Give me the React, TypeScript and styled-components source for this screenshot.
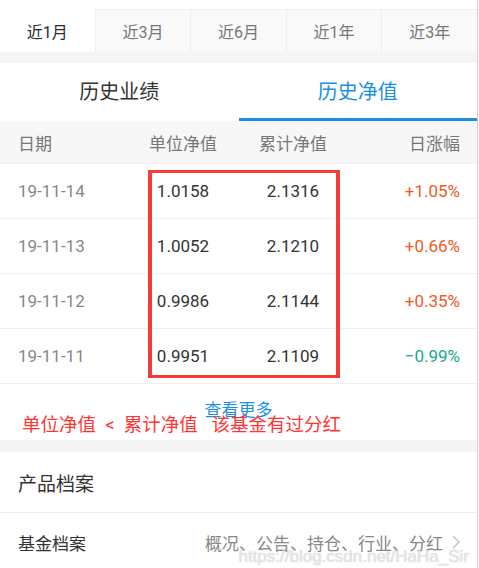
import React from "react";
import styled, { createGlobalStyle } from "styled-components";

const GlobalStyle = createGlobalStyle`
  html, body {
    margin: 0;
    padding: 0;
    background: #fff;
  }
  body {
    font-family: Roboto, "Noto Sans CJK SC", sans-serif;
  }
`;

const Page = styled.div`
  width: 477px;
  border-right: 1px solid #cfcfcf;
  min-height: 568px;
  position: relative;
  overflow: hidden;
`;

const PeriodBar = styled.div`
  display: flex;
  padding-top: 9px;
  height: 43px;
`;

const PeriodTab = styled.div<{ $active?: boolean }>`
  flex: 1;
  display: flex;
  align-items: center;
  justify-content: center;
  font-size: 16px;
  color: ${({ $active }) => ($active ? "#2a2a2a" : "#777")};
  background: ${({ $active }) => ($active ? "#fff" : "#f9f9f9")};
  border-top: 1px solid ${({ $active }) => ($active ? "#fff" : "#eeeeee")};
  margin-top: ${({ $active }) => ($active ? "-9px" : "0")};
  padding-top: ${({ $active }) => ($active ? "9px" : "0")};

  & + & {
    border-left: 1px solid #eeeeee;
  }
`;

const Gap = styled.div<{ $h: number }>`
  height: ${({ $h }) => $h}px;
  background: #f4f4f4;
`;

const SectionBar = styled.div`
  display: flex;
  height: 58px;
`;

const SectionTab = styled.div<{ $active?: boolean }>`
  flex: 1;
  display: flex;
  align-items: center;
  justify-content: center;
  font-size: 20px;
  color: ${({ $active }) => ($active ? "#1a8fe3" : "#333")};
  border-bottom: 3px solid ${({ $active }) => ($active ? "#1a8fe3" : "transparent")};
  box-sizing: border-box;
`;

const Row = styled.div<{ $head?: boolean }>`
  display: grid;
  grid-template-columns: 110px 110px 110px 1fr;
  align-items: center;
  padding: 0 17px 0 18px;
  height: ${({ $head }) => ($head ? "43px" : "55px")};
  background: ${({ $head }) => ($head ? "#f7f7f7" : "#fff")};
  border-bottom: 1px solid #f0f0f0;
  box-sizing: border-box;
  font-size: 17px;
`;

const Cell = styled.div<{ $align?: "left" | "center" | "right"; $color?: string }>`
  text-align: ${({ $align }) => $align ?? "left"};
  color: ${({ $color }) => $color ?? "#333"};
`;

const Body = styled.div`
  position: relative;
`;

const Highlight = styled.div`
  position: absolute;
  left: 148px;
  top: 6px;
  width: 192px;
  height: 208px;
  border: solid #f23b3b;
  border-width: 3px 4px;
  box-sizing: border-box;
  pointer-events: none;
`;

const MoreArea = styled.div`
  position: relative;
  height: 56px;
`;

const MoreLink = styled.div`
  padding-top: 15px;
  text-align: center;
  font-size: 17px;
  line-height: 22px;
  color: #1a8fe3;
`;

const Note = styled.div`
  position: absolute;
  left: 22px;
  top: 30px;
  font-size: 18.5px;
  line-height: 22px;
  color: #ff3535;
  white-space: pre;
`;

const InfoRow = styled.div<{ $h: number; $line?: boolean }>`
  display: flex;
  align-items: center;
  justify-content: space-between;
  padding: 0 17px 0 18px;
  height: ${({ $h }) => $h}px;
  border-bottom: ${({ $line }) => ($line ? "1px solid #eeeeee" : "none")};
  box-sizing: border-box;
`;

const InfoTitle = styled.div<{ $size: number }>`
  font-size: ${({ $size }) => $size}px;
  color: #333;
`;

const InfoSub = styled.div`
  display: flex;
  align-items: center;
  gap: 9px;
  font-size: 17px;
  color: #888;
`;

const Watermark = styled.div`
  position: absolute;
  right: 8px;
  bottom: 4px;
  font-size: 17px;
  color: rgba(232, 232, 232, 0.85);
  text-shadow: 0 0 1px rgba(150, 150, 150, 0.5);
  font-family: "Liberation Sans", Arial, sans-serif;
  pointer-events: none;
`;

const periods = ["近1月", "近3月", "近6月", "近1年", "近3年"];

const rows = [
  { date: "19-11-14", unit: "1.0158", total: "2.1316", change: "+1.05%" },
  { date: "19-11-13", unit: "1.0052", total: "2.1210", change: "+0.66%" },
  { date: "19-11-12", unit: "0.9986", total: "2.1144", change: "+0.35%" },
  { date: "19-11-11", unit: "0.9951", total: "2.1109", change: "−0.99%" },
];

const Chevron = () => (
  <svg width="8" height="14" viewBox="0 0 8 14">
    <polyline points="1,1 7,7 1,13" fill="none" stroke="#bbb" strokeWidth="1.3" />
  </svg>
);

export default function App() {
  return (
    <Page>
      <GlobalStyle />
      <PeriodBar>
        {periods.map((p, i) => (
          <PeriodTab key={p} $active={i === 0}>
            {p}
          </PeriodTab>
        ))}
      </PeriodBar>
      <Gap $h={11} />
      <SectionBar>
        <SectionTab>历史业绩</SectionTab>
        <SectionTab $active>历史净值</SectionTab>
      </SectionBar>
      <Row $head>
        <Cell $color="#777">日期</Cell>
        <Cell $align="center" $color="#777">单位净值</Cell>
        <Cell $align="center" $color="#777">累计净值</Cell>
        <Cell $align="right" $color="#777">日涨幅</Cell>
      </Row>
      <Body>
        {rows.map((r) => (
          <Row key={r.date}>
            <Cell $color="#888">{r.date}</Cell>
            <Cell $align="center">{r.unit}</Cell>
            <Cell $align="center">{r.total}</Cell>
            <Cell $align="right" $color={r.change.startsWith("+") ? "#ee5a24" : "#16a88e"}>
              {r.change}
            </Cell>
          </Row>
        ))}
        <Highlight />
      </Body>
      <MoreArea>
        <MoreLink>查看更多</MoreLink>
        <Note>{"单位净值  <  累计净值   该基金有过分红"}</Note>
      </MoreArea>
      <Gap $h={12} />
      <InfoRow $h={61} $line>
        <InfoTitle $size={19}>产品档案</InfoTitle>
      </InfoRow>
      <InfoRow $h={58}>
        <InfoTitle $size={17}>基金档案</InfoTitle>
        <InfoSub>
          概况、公告、持仓、行业、分红
          <Chevron />
        </InfoSub>
      </InfoRow>
      <Watermark>https://blog.csdn.net/HaHa_Sir</Watermark>
    </Page>
  );
}
